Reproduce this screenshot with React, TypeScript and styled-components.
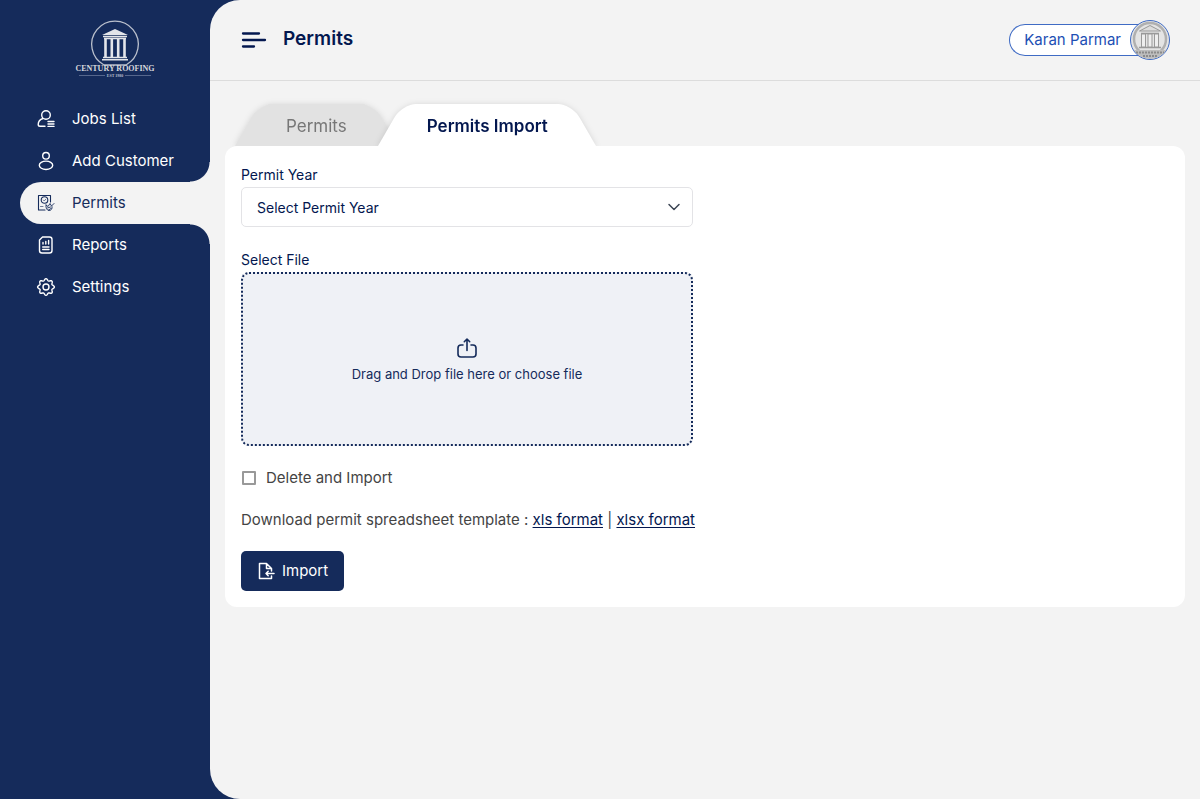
import React from "react";
import styled, { createGlobalStyle, css } from "styled-components";

const navy = "#152b5b";
const ink = "#03174f";
const page = "#f3f3f3";
const blue = "#1d4fb4";

const GlobalStyle = createGlobalStyle`
  *, *::before, *::after { box-sizing: border-box; }
  body { margin: 0; background: ${navy}; font-family: Inter, "Liberation Sans", sans-serif; font-size: 15px; line-height: 20px; color: #444; }
  button, select, input { font: inherit; }
`;

const Shell = styled.div`
  display: flex;
  min-height: 100vh;
  background: ${navy};
`;

const Sidebar = styled.aside`
  width: 210px;
  flex: none;
  padding: 16px 0 0 20px;
`;

const Brand = styled.a`
  display: block;
  height: 82px;
  svg { display: block; margin: 0 auto; }
`;

const Menu = styled.nav`
  display: flex;
  flex-direction: column;
`;

const MenuLink = styled.a<{ $active?: boolean }>`
  position: relative;
  display: flex;
  align-items: center;
  gap: 16px;
  height: 42px;
  padding-left: 16px;
  color: #fff;
  text-decoration: none;
  svg { flex: none; }
  ${(p) =>
    p.$active &&
    css`
      color: ${navy};
      background: ${page};
      border-radius: 21px 0 0 21px;
      &::before, &::after {
        content: "";
        position: absolute;
        right: 0;
        width: 20px;
        height: 20px;
      }
      &::before { bottom: 100%; background: radial-gradient(circle at 0 0, transparent 19px, ${page} 20px); }
      &::after { top: 100%; background: radial-gradient(circle at 0 100%, transparent 19px, ${page} 20px); }
    `}
`;

const Main = styled.main`
  flex: 1;
  min-width: 0;
  background: ${page};
  border-radius: 30px 0 0 30px;
`;

const Header = styled.header`
  display: flex;
  align-items: center;
  justify-content: space-between;
  height: 81px;
  padding: 0 30px;
  border-bottom: 1px solid #dcdcdc;
`;

const Heading = styled.div`
  display: flex;
  align-items: center;
  gap: 16px;
`;

const MenuButton = styled.button`
  padding: 0;
  border: 0;
  background: none;
  svg { display: block; }
`;

const Title = styled.h1`
  margin: 0;
  padding-bottom: 2px;
  font-size: 19px;
  line-height: 24px;
  font-weight: 600;
  color: ${ink};
`;

const UserButton = styled.button`
  display: flex;
  align-items: center;
  padding: 0;
  border: 0;
  background: none;
  color: ${blue};
`;

const UserName = styled.span`
  height: 32px;
  padding: 0 25px 0 14px;
  margin-right: -16px;
  border: 1px solid #3f6bc4;
  border-right: 0;
  border-radius: 16px 0 0 16px;
  background: #fff;
  line-height: 30px;
`;

const Avatar = styled.span`
  position: relative;
  width: 40px;
  height: 40px;
  border: 1px solid #3f6bc4;
  border-radius: 50%;
  overflow: hidden;
  background: #e4e4e4;
  svg { display: block; }
`;

const Content = styled.div`
  padding: 23px 15px;
`;

const Tabs = styled.div`
  display: flex;
  padding-left: 10px;
`;

const Tab = styled.button<{ $active?: boolean }>`
  position: relative;
  z-index: ${(p) => (p.$active ? 1 : 0)};
  height: 42px;
  padding: ${(p) => (p.$active ? "2px 49px 0" : "2px 51px 0")};
  margin-left: ${(p) => (p.$active ? "-20px" : "0")};
  border: 0;
  background: none;
  font-size: 17px;
  font-weight: ${(p) => (p.$active ? 600 : 400)};
  color: ${(p) => (p.$active ? ink : "#777")};
  filter: drop-shadow(0 1px 3px rgba(0, 0, 0, 0.14));
  &::before, &::after {
    content: "";
    position: absolute;
    z-index: -1;
    top: 0;
    bottom: 0;
    width: 65%;
    background: ${(p) => (p.$active ? "#fff" : "#e2e2e2")};
  }
  &::before { left: 0; border-top-left-radius: 14px; transform: skewX(-30deg); transform-origin: 0 100%; }
  &::after { right: 0; border-top-right-radius: 14px; transform: skewX(30deg); transform-origin: 100% 100%; }
`;

const Panel = styled.form`
  position: relative;
  z-index: 2;
  display: grid;
  grid-template-columns: minmax(0, 1fr) minmax(0, 1fr);
  gap: 24px;
  padding: 16px;
  border-radius: 12px;
  background: #fff;
`;

const Column = styled.div`
  display: flex;
  flex-direction: column;
  align-items: stretch;
`;

const Label = styled.label`
  height: 25px;
  font-size: 14px;
  line-height: 26px;
  color: ${ink};
`;

const SelectWrap = styled.div`
  position: relative;
  margin-bottom: 20px;
  svg { position: absolute; right: 12px; top: 13px; pointer-events: none; }
`;

const Select = styled.select`
  display: block;
  width: 100%;
  height: 40px;
  padding: 2px 15px 0;
  appearance: none;
  border: 1px solid #e3e3e6;
  border-radius: 5px;
  background: #fff;
  font-size: 14px;
  color: ${ink};
`;

const DropZone = styled.label`
  display: flex;
  flex-direction: column;
  align-items: center;
  justify-content: center;
  gap: 5px;
  height: 174px;
  padding-top: 2px;
  border: 2px dotted ${navy};
  border-radius: 8px;
  background: #eff1f6;
  color: ${navy};
  font-size: 13px;
  input { position: absolute; width: 1px; height: 1px; opacity: 0; }
`;

const CheckRow = styled.label`
  display: flex;
  align-items: center;
  gap: 9px;
  margin: 22px 0;
`;

const Checkbox = styled.input`
  appearance: none;
  width: 14px;
  height: 14px;
  margin: 0 1px;
  border: 2px solid #999;
  border-radius: 1px;
  background: #fff;
  &:checked { background: ${navy}; }
`;

const Download = styled.p`
  margin: 0 0 21px;
  white-space: nowrap;
  a { color: ${ink}; text-underline-offset: 2px; }
`;

const ImportButton = styled.button`
  display: flex;
  align-items: center;
  align-self: flex-start;
  gap: 6px;
  height: 40px;
  padding: 0 16px;
  border: 0;
  border-radius: 5px;
  background: ${navy};
  color: #fff;
`;

function Temple() {
  return (
    <>
      <path d="M-13 -9 L0 -15 L13 -9 Z" fill="currentColor" />
      <path d="M-12 -7.500H12M-11 -5.500H11" stroke="currentColor" strokeWidth="1.3" />
      <path d="M-9.500 -5V13M-3.200 -5V13M3.200 -5V13M9.500 -5V13" stroke="currentColor" strokeWidth="2.6" />
      <path d="M-12 13.500H12M-13 15.800H13" stroke="currentColor" strokeWidth="1.5" />
    </>
  );
}

function Logo() {
  return (
    <svg width="80" height="64" viewBox="0 0 80 64" fill="none" color="#e3e5ea">
      <path d="M29 49A23.3 23.3 0 1 1 51 49Z" stroke="#b9bfcc" strokeWidth="1.3" />
      <g transform="translate(40 28)"><Temple /></g>
      <text x="40" y="55" textAnchor="middle" fontFamily="Liberation Serif, serif" fontWeight="700" fontSize="8" fill="#d5d7dc">CENTURY ROOFING</text>
      <path d="M4 59.500H30M50 59.500H76" stroke="#56678d" />
      <text x="40" y="61" textAnchor="middle" fontFamily="Liberation Serif, serif" fontWeight="700" fontSize="4" fill="#b9bfcc">EST 1980</text>
    </svg>
  );
}

function AvatarArt() {
  return (
    <svg width="38" height="38" viewBox="0 0 38 38" fill="none">
      <circle cx="19" cy="18" r="16" stroke="#b0b0b0" strokeWidth="2.500" />
      <path d="M8.500 10L19 4.500L29.500 10Z" fill="#ddd" stroke="#999" />
      <path d="M10 12.500H28M8 26.500H30" stroke="#999" strokeWidth="1.500" />
      <path d="M10.500 13H14.500V26H10.500ZM17 13H21V26H17ZM23.500 13H27.500V26H23.500Z" fill="#eee" stroke="#999" />
      <path d="M2 29H36L31 38H7Z" fill="#bdbdbd" />
      <path d="M5 31.500H33M12 35H26" stroke="#8b8b8b" strokeWidth="1.800" strokeDasharray="2 1" />
    </svg>
  );
}

const iconProps = {
  width: 20, height: 20, viewBox: "0 0 20 20", fill: "none",
  stroke: "currentColor", strokeWidth: 1.4, strokeLinecap: "round" as const, strokeLinejoin: "round" as const,
};

const JobsIcon = () => (
  <svg {...iconProps}>
    <circle cx="10" cy="6" r="4.300" />
    <path d="M7 9.500C4 10.500 2.200 13 2.200 15.500Q2.200 17.300 4 17.300H9M12 12.500H18M12 15H18M12 17.400H18" />
  </svg>
);
const CustomerIcon = () => (
  <svg {...iconProps}>
    <circle cx="10" cy="4.800" r="3.300" />
    <ellipse cx="10" cy="14.300" rx="6.700" ry="4.200" />
  </svg>
);
const PermitIcon = () => (
  <svg {...iconProps} strokeWidth={1.1}>
    <path d="M9 17H2.500V2.500H14.500V9" />
    <circle cx="8.500" cy="7" r="3.300" />
    <path d="M7.300 7L8.200 8L9.800 6.200M4.500 13.500H7" strokeWidth=".6" />
    <path d="M10 12L12 13.500L14 10.500L15.500 13L18 10.500M10 12C9.500 15 11 17.500 13 17.500C15.500 17.500 16.500 15.500 16 13.500M11.500 15L14.500 14M12.500 17L15 15.500" strokeWidth=".9" />
  </svg>
);
const ReportIcon = () => (
  <svg {...iconProps}>
    <path d="M6.500 2H13.500Q16 2 16 4.500V15.500Q16 18 13.500 18H6Q3.500 18 3.500 15.500V5Z" />
    <path d="M7 9V7.500M9.800 9V6.500M12.600 9V5.500M6.700 12H13M6.700 14.500H13" />
  </svg>
);
const gear = Array.from({ length: 72 }, (_, i) => {
  const angle = (i * 5 * Math.PI) / 180;
  const radius = 7.4 + Math.cos(angle * 8);
  const x = 10 + radius * Math.sin(angle);
  const y = 10 - radius * Math.cos(angle);
  return `${i ? "L" : "M"}${x.toFixed(2)} ${y.toFixed(2)}`;
}).join("");
const SettingsIcon = () => (
  <svg {...iconProps}>
    <circle cx="10" cy="10" r="3" />
    <path d={`${gear}Z`} />
  </svg>
);

const items = [
  { name: "Jobs List", Icon: JobsIcon },
  { name: "Add Customer", Icon: CustomerIcon },
  { name: "Permits", Icon: PermitIcon, active: true },
  { name: "Reports", Icon: ReportIcon },
  { name: "Settings", Icon: SettingsIcon },
];

export default function App() {
  return (
    <>
      <GlobalStyle />
      <Shell>
        <Sidebar>
          <Brand href="#" aria-label="Century Roofing"><Logo /></Brand>
          <Menu>
            {items.map(({ name, Icon, active }) => (
              <MenuLink key={name} href="#" $active={active}><Icon />{name}</MenuLink>
            ))}
          </Menu>
        </Sidebar>
        <Main>
          <Header>
            <Heading>
              <MenuButton type="button" aria-label="Toggle menu">
                <svg width="27" height="20" viewBox="0 0 27 20" stroke={ink} strokeWidth="2.300" strokeLinecap="round">
                  <path d="M3 3.500H19M3 10H25M3 16.500H14" />
                </svg>
              </MenuButton>
              <Title>Permits</Title>
            </Heading>
            <UserButton type="button">
              <UserName>Karan Parmar</UserName>
              <Avatar><AvatarArt /></Avatar>
            </UserButton>
          </Header>
          <Content>
            <Tabs role="tablist">
              <Tab type="button" role="tab" aria-selected={false}>Permits</Tab>
              <Tab type="button" role="tab" aria-selected $active>Permits Import</Tab>
            </Tabs>
            <Panel onSubmit={(e) => e.preventDefault()}>
              <Column>
                <Label htmlFor="year">Permit Year</Label>
                <SelectWrap>
                  <Select id="year"><option>Select Permit Year</option></Select>
                  <svg width="14" height="14" viewBox="0 0 14 14" fill="none" stroke="#3c4654" strokeWidth="1.500" strokeLinecap="round" strokeLinejoin="round"><path d="M2 4.500L7 9.500L12 4.500" /></svg>
                </SelectWrap>
                <Label htmlFor="file">Select File</Label>
                <DropZone>
                  <input id="file" type="file" />
                  <svg width="22" height="22" viewBox="0 0 22 22" fill="none" stroke="currentColor" strokeWidth="1.600" strokeLinecap="round" strokeLinejoin="round">
                    <path d="M7 8H5Q2 8 2 11V17Q2 20 5 20H17Q20 20 20 17V11Q20 8 17 8H15M11 13.500V2M8.300 4.700L11 2L13.700 4.700" />
                  </svg>
                  <span>Drag and Drop file here or choose file</span>
                </DropZone>
                <CheckRow><Checkbox type="checkbox" />Delete and Import</CheckRow>
                <Download>
                  Download permit spreadsheet template : <a href="#">xls format</a> | <a href="#">xlsx format</a>
                </Download>
                <ImportButton type="submit">
                  <svg width="19" height="20" viewBox="0 0 19 20" fill="none" stroke="currentColor" strokeWidth="1.500" strokeLinecap="round" strokeLinejoin="round">
                    <path d="M14.500 15V17.500H2.500V2.500H9.500L14.500 7.500V10M9.500 2.500V7.500H14.500M17 12.500H9M11.200 10.300L9 12.500L11.200 14.700" />
                  </svg>
                  Import
                </ImportButton>
              </Column>
            </Panel>
          </Content>
        </Main>
      </Shell>
    </>
  );
}
